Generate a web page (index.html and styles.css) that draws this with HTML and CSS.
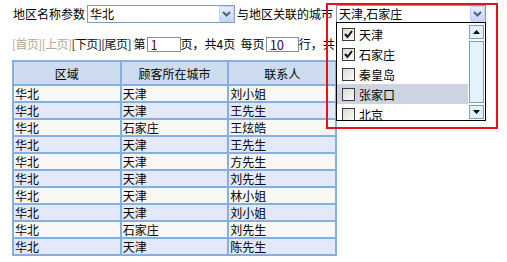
FILE: index.html
```html
<!DOCTYPE html>
<html lang="zh-CN">
<head>
    <meta charset="UTF-8">
    <title>地区城市联动查询</title>
    <link rel="stylesheet" href="styles.css">
</head>
<body>
    <div class="page">
        <!-- filter row -->
        <div class="filter-bar">
            <span class="label">地区名称参数</span>
            <div class="combo combo-area">
                <span class="combo-text">华北</span>
                <span class="combo-btn">
                    <svg width="9" height="6" viewBox="0 0 9 6"><polyline points="1,1 4.5,4.5 8,1" fill="none" stroke="#4d6185" stroke-width="2"/></svg>
                </span>
            </div>
            <span class="label label-city">与地区关联的城市</span>
            <div class="city-wrap">
                <div class="combo combo-city">
                    <span class="combo-text">天津,石家庄</span>
                    <span class="combo-btn">
                        <svg width="9" height="6" viewBox="0 0 9 6"><polyline points="1,1 4.5,4.5 8,1" fill="none" stroke="#4d6185" stroke-width="2"/></svg>
                    </span>
                </div>
                <div class="city-list">
                    <ul class="city-items">
                        <li><span class="check checked"><svg width="9" height="9" viewBox="0 0 9 9"><polyline points="1,4 3.5,7 8,1" fill="none" stroke="#111" stroke-width="2"/></svg></span>天津</li>
                        <li><span class="check checked"><svg width="9" height="9" viewBox="0 0 9 9"><polyline points="1,4 3.5,7 8,1" fill="none" stroke="#111" stroke-width="2"/></svg></span>石家庄</li>
                        <li><span class="check"></span>秦皇岛</li>
                        <li class="hover"><span class="check"></span>张家口</li>
                        <li><span class="check"></span>北京</li>
                    </ul>
                    <div class="scrollbar">
                        <span class="sb-btn"><svg width="7" height="4" viewBox="0 0 7 4"><polygon points="0,4 3.5,0 7,4" fill="#000"/></svg></span>
                        <span class="sb-track"></span>
                        <span class="sb-btn"><svg width="7" height="4" viewBox="0 0 7 4"><polygon points="0,0 7,0 3.5,4" fill="#000"/></svg></span>
                    </div>
                </div>
                <div class="highlight-box"></div>
            </div>
        </div>

        <!-- pager -->
        <div class="pager">
            <span class="pg-off">[首页]</span><span class="pg-off">[上页]</span><span class="pg-on">[下页]</span><span class="pg-on">[尾页]</span>
            <span class="pg-txt">&nbsp;第</span><input class="pg-input pg-page" value="1">
            <span class="pg-txt">页，共4页&nbsp;&nbsp;每页</span><input class="pg-input pg-rows" value="10">
            <span class="pg-txt">行，共</span>
        </div>

        <table class="grid">
            <thead>
                <tr><th>区域</th><th>顾客所在城市</th><th>联系人</th></tr>
            </thead>
            <tbody>
                <tr><td>华北</td><td>天津</td><td>刘小姐</td></tr>
                <tr><td>华北</td><td>天津</td><td>王先生</td></tr>
                <tr><td>华北</td><td>石家庄</td><td>王炫皓</td></tr>
                <tr><td>华北</td><td>天津</td><td>王先生</td></tr>
                <tr><td>华北</td><td>天津</td><td>方先生</td></tr>
                <tr><td>华北</td><td>天津</td><td>刘先生</td></tr>
                <tr><td>华北</td><td>天津</td><td>林小姐</td></tr>
                <tr><td>华北</td><td>天津</td><td>刘小姐</td></tr>
                <tr><td>华北</td><td>石家庄</td><td>刘先生</td></tr>
                <tr><td>华北</td><td>天津</td><td>陈先生</td></tr>
            </tbody>
        </table>
    </div>
</body>
</html>
```

FILE: styles.css
```css
* {
    box-sizing: border-box;
    margin: 0;
    padding: 0;
}

body {
    background-color: #fff;
    font-family: "Noto Sans CJK SC", "DejaVu Sans", sans-serif;
    font-size: 12px;
    color: #000;
}

.page {
    padding: 5px 0 0 12px;
}

/* filter row */
.filter-bar {
    display: flex;
    align-items: center;
    height: 18px;
}

.label {
    line-height: 18px;
    padding-left: 1px;
}

.combo {
    display: flex;
    align-items: center;
    height: 18px;
    border: 1px solid #7f9db9;
    background-color: #fff;
}

.combo-area {
    width: 148px;
    margin-left: 2px;
}

.label-city {
    margin-left: 2px;
    padding-left: 0;
}

.city-wrap {
    position: relative;
    margin-left: 3px;
}

.combo-city {
    width: 150px;
}

.combo-text {
    flex: 1;
    line-height: 16px;
    padding-left: 2px;
    font-size: 12px;
}

.combo-btn {
    display: flex;
    justify-content: center;
    align-items: center;
    width: 15px;
    height: 16px;
    border: 1px solid #c3d3fd;
    border-radius: 1px;
    background: linear-gradient(#e6eefc, #c4d6f8);
}

/* popup list */
.city-list {
    position: absolute;
    top: 17px;
    left: 0;
    width: 150px;
    height: 99px;
    border: 1px solid #000;
    background-color: #fff;
    display: flex;
    overflow: hidden;
    z-index: 2;
}

.city-items {
    list-style: none;
    flex: 1;
    padding-top: 1px;
}

.city-items li {
    display: flex;
    align-items: center;
    height: 20px;
    padding-left: 5px;
    font-size: 12px;
}

.city-items li.hover {
    background-color: #cdd3e0;
}

.check {
    display: flex;
    justify-content: center;
    align-items: center;
    width: 13px;
    height: 13px;
    margin-right: 4px;
    border: 1px solid #3c3c3c;
    background: linear-gradient(135deg, #dcdcd6, #fbfbf9);
}

.scrollbar {
    display: flex;
    flex-direction: column;
    width: 17px;
    padding: 2px 1px 1px 1px;
    gap: 2px;
}

.sb-btn {
    display: flex;
    justify-content: center;
    align-items: center;
    height: 14px;
    border: 1px solid #7f9db9;
    background-color: #e2effc;
}

.sb-track {
    flex: 1;
    border: 1px solid #7f9db9;
    background-color: #e5f1fd;
}

.highlight-box {
    position: absolute;
    top: -2px;
    left: -10px;
    width: 172px;
    height: 126px;
    border: 2px solid #e8101a;
    z-index: 3;
}

/* pager */
.pager {
    display: flex;
    align-items: center;
    margin-top: 14px;
    height: 14px;
    line-height: 14px;
}

.pg-off,
.pg-on {
    letter-spacing: -0.6px;
}

.pg-off {
    color: #b4a99a;
}

.pg-on {
    color: #111;
}

.pg-input {
    width: 34px;
    height: 15px;
    border: 1px solid #8c8c8c;
    font-family: inherit;
    font-size: 13px;
    line-height: 13px;
    padding: 1px 0 0 3px;
    color: #3a0a5a;
}

.pg-page {
    margin-left: 1px;
    color: #5a1010;
}

.pg-rows {
    margin-left: 1px;
    width: 33px;
}

/* data grid */
.grid {
    margin-top: 9px;
    width: 325px;
    border-collapse: collapse;
    table-layout: fixed;
}

.grid th,
.grid td {
    border: 2px solid #83b0e4;
    text-align: left;
    font-weight: normal;
}

.grid th {
    height: 24px;
    text-align: center;
    font-size: 12px;
    background-color: #cedcf0;
}

.grid td {
    height: 17px;
    line-height: 15px;
    padding: 0 0 0 1px;
    font-size: 12px;
}

.grid tbody tr:nth-child(odd) {
    background-color: #f8f7f3;
}

.grid tbody tr:nth-child(even) {
    background-color: #e3e9fb;
}
```
